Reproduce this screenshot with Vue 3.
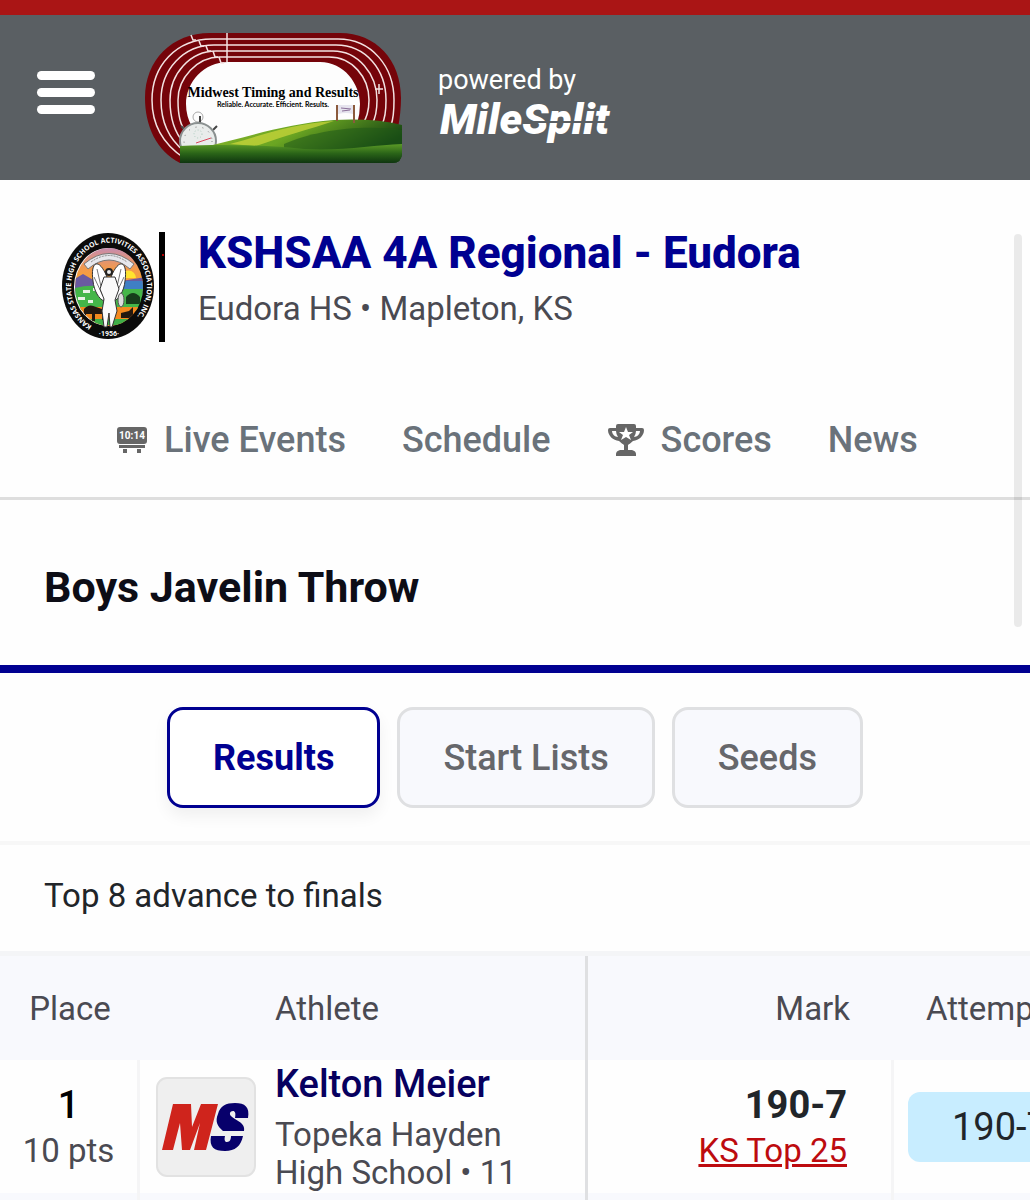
<template>
  <div class="page">
    <div class="stripe"></div>
    <header class="topbar">
      <button class="menu" type="button" aria-label="Menu">
        <span></span>
        <span></span>
        <span></span>
      </button>

      <a class="timer-logo" href="#" aria-label="Midwest Timing and Results">
        <svg width="260" height="132" viewBox="0 0 260 132">
          <defs>
            <linearGradient id="front" x1="0" y1="0" x2="0" y2="1">
              <stop offset="0" stop-color="#5b9a26" />
              <stop offset="0.5" stop-color="#2a6418" />
              <stop offset="1" stop-color="#0f3510" />
            </linearGradient>
            <linearGradient id="hill" x1="0" y1="0" x2="1" y2="0.4">
              <stop offset="0" stop-color="#8fb82e" />
              <stop offset="0.5" stop-color="#6aa522" />
              <stop offset="1" stop-color="#123f12" />
            </linearGradient>
          </defs>
          <path
            d="M66 1H196C232 1 257 28 257 66Q257 80 254 96L200 112H36V131C12 119 1 93 1 66C1 28 28 1 66 1Z"
            fill="#75040a"
          />
          <path d="M40 126C19 112 8 92 8 68C8 34 32 7 68 7H194C228 7 250 35 250 68C250 80 249 88 247 93" class="lane" />
          <path d="M40 119C25 107 17 90 17 68C17 38 39 13 70 13H192C222 13 242 38 242 68C242 80 241 87 238 92" class="lane" />
          <path d="M40 111C30 100 26 86 26 68C26 42 46 19 72 19H189C214 19 233 42 233 68C233 80 231 87 228 92" class="lane" />
          <path d="M43 102C36 93 34 83 34 68C34 46 53 25 76 25H185C208 25 225 45 225 68C225 80 222 86 219 92" class="lane" />
          <path d="M48 95Q42 84 42 72C42 50 60 30 84 30H176C200 30 216 52 216 72Q216 82 213 92L120 112H56Z" fill="#fdfdfd" />
          <path
            d="M83 1V30M47 3L49 8H52M55 9L57 14H60M62 14L64 19H67M69 19L71 25H74M75 25L77 31H80M235 52V62M231 57H239"
            class="lane"
          />
          <circle cx="54" cy="85" r="5" fill="none" stroke="#aaa" />
          <path d="M56 84V92M69 98L73 94M41 98L37 94" stroke="#444" stroke-width="2" />
          <circle cx="54" cy="109" r="18" fill="#e9eceb" stroke="#8a9090" stroke-width="2" />
          <circle cx="54" cy="109" r="14" fill="none" stroke="#777" stroke-dasharray="1 6" />
          <path d="M52 111L67 106" stroke="#d9455a" />
          <circle cx="54" cy="102" r="4" fill="none" stroke="#a9cabc" stroke-dasharray="1 2" />
          <path d="M60 115C100 106 140 92 190 88Q230 86 258 93V121Q258 131 248 131H60Z" fill="url(#hill)" />
          <path d="M86 112C116 104 146 92 190 89C166 97 140 104 112 114Z" fill="#cfd93c" opacity="0.7" />
          <path d="M140 112C170 98 220 92 258 98V121H140Z" fill="#1f5a18" opacity="0.55" />
          <path d="M36 114C80 112 120 113 160 117C200 119 230 113 258 112V121Q258 131 248 131H36Z" fill="url(#front)" />
          <path d="M193 73V89M210 73V91" stroke="#8b5a3c" stroke-width="2" />
          <path d="M194 73H209V82Q202 80 194 82Z" fill="#e6e4ee" />
          <path d="M197 76L207 77M198 79L206 78" stroke="#8a6f98" />
          <text x="129" y="65" text-anchor="middle" class="timer-name">Midwest Timing and Results</text>
          <text x="129" y="75" text-anchor="middle" class="timer-tag">Reliable. Accurate. Efficient. Results.</text>
        </svg>
      </a>

      <a class="powered" href="#">
        <span>powered by</span>
        <svg width="190" height="52" viewBox="0 0 190 52">
          <text x="2" y="38" class="milesplit">MileSplit</text>
          <path d="M84 26H176" stroke="#5a5f63" stroke-width="2" />
        </svg>
      </a>
    </header>

    <section class="meet">
      <svg class="seal" width="104" height="112" viewBox="0 0 104 112">
        <defs>
          <path id="ring" d="M31 95A38 44 0 1 1 65 95" />
          <linearGradient id="sunset" x1="0" y1="0" x2="0" y2="1">
            <stop offset="0" stop-color="#c58bb5" />
            <stop offset="0.5" stop-color="#f39a4a" />
            <stop offset="1" stop-color="#f7a823" />
          </linearGradient>
          <clipPath id="scene"><ellipse cx="48" cy="56" rx="34" ry="39" /></clipPath>
        </defs>
        <ellipse cx="47" cy="55" rx="46" ry="53" fill="#0b0b0b" />
        <ellipse cx="47" cy="56" rx="34" ry="39" fill="#fff" />
        <g clip-path="url(#scene)">
          <rect x="10" y="16" width="80" height="44" fill="url(#sunset)" />
          <path d="M10 50L22 43L34 50L44 47L60 50L86 46V66H10Z" fill="#6a5aa0" />
          <path d="M60 47A7 7 0 0 1 75 47Z" fill="#ffe32e" />
          <path d="M10 58Q30 52 48 57L86 53V80H10Z" fill="#45b649" />
          <path d="M60 50H84V58H60Z" fill="#3f7fc4" />
          <path d="M10 76H86V98H10Z" fill="#f58a1f" />
          <path d="M16 88H78V94H16Z" fill="#3fae49" />
          <path d="M22 59H29V62H22ZM32 57H38V60H32ZM17 66H24V69H17ZM27 69H32V72H27Z" fill="#e9f2e5" />
          <path d="M65 66Q72 58 79 66V73H65Z" fill="#173d1b" />
          <path d="M23 78Q28 72 35 76L44 79V89H41V83H34V90H31V83H25V89H22ZM60 82L68 80L72 76V87H60Z" fill="#24180f" />
        </g>
        <path d="M23 33Q48 12 73 33L69 38Q48 20 27 38Z" fill="#e7e7ec" stroke="#777" />
        <path d="M30 31Q48 18 66 31" fill="none" stroke="#888" stroke-dasharray="2 1" />
        <path d="M46 46C38 26 29 30 32 50C33 60 38 68 43 70ZM50 46C58 26 67 30 64 50C63 60 58 68 53 70Z" fill="#fff" stroke="#333" />
        <path d="M36 38L41 60M33 46L42 65M60 38L55 60M63 46L54 65" stroke="#777" />
        <path d="M43 46H54L58 58L54 69L56 80L51 96H49L48 82L46 96H43L41 80L43 68L39 58Z" fill="#fafafa" stroke="#333" />
        <circle cx="48" cy="41" r="3" fill="#eee" stroke="#222" stroke-width="2" />
        <ellipse cx="60" cy="69" rx="3" ry="7" fill="#ddd" stroke="#555" />
        <text class="seal-text">
          <textPath href="#ring">KANSAS STATE HIGH SCHOOL ACTIVITIES ASSOCIATION, INC.</textPath>
        </text>
        <text x="48" y="105" text-anchor="middle" class="seal-year">·1956·</text>
        <rect x="98" y="1" width="6" height="110" fill="#000" />
        <circle cx="102" cy="24" r="1" fill="#e00" />
      </svg>
      <div>
        <h1>KSHSAA 4A Regional - Eudora</h1>
        <p class="venue">Eudora HS • Mapleton, KS</p>
      </div>
    </section>

    <nav class="tabs">
      <a href="#">
        <svg width="32" height="28" viewBox="0 0 32 28">
          <rect x="1" y="1" width="30" height="17" rx="3" fill="#666" />
          <text x="16" y="13" text-anchor="middle" class="clock">10:14</text>
          <path d="M3 19H29V22H3ZM7 23H11V27H7ZM21 23H25V27H21Z" fill="#666" />
        </svg>
        Live Events
      </a>
      <a href="#">Schedule</a>
      <a href="#">
        <svg width="38" height="34" viewBox="0 0 38 34">
          <path
            d="M9 5V3Q9 1 11 1H27Q29 1 29 3V5H35Q37 5 37 7C37 13 32 17 26 18C24 20 22 21 21 22V27H25Q29 28 29 31V33H9V31Q9 28 13 27H17V22C16 21 14 20 12 18C6 17 1 13 1 7Q1 5 3 5ZM9 8H5C5 11 8 14 11 14Q9 11 9 8ZM29 8Q29 11 27 14C30 14 33 11 33 8Z"
            fill="#666"
            fill-rule="evenodd"
          />
          <path d="M19 4L21 9L26 9L22 12L24 17L19 14L14 17L16 12L12 9L17 9Z" fill="#fff" />
        </svg>
        Scores
      </a>
      <a href="#">News</a>
    </nav>

    <h2>Boys Javelin Throw</h2>

    <div class="views">
      <button
        v-for="view in views"
        :key="view"
        type="button"
        :class="{ active: view === current }"
        @click="current = view"
      >
        {{ view }}
      </button>
    </div>

    <p class="note">Top 8 advance to finals</p>

    <div class="results">
      <table>
        <colgroup>
          <col class="col-place" />
          <col class="col-logo" />
          <col class="col-athlete" />
          <col class="col-mark" />
          <col class="col-attempt" />
        </colgroup>
        <thead>
          <tr>
            <th>Place</th>
            <th></th>
            <th class="athlete">Athlete</th>
            <th class="mark">Mark</th>
            <th class="attempt">Attempts</th>
          </tr>
        </thead>
        <tbody>
          <tr>
            <td class="place">
              <strong>1</strong>
              <span>10 pts</span>
            </td>
            <td class="logo">
              <svg width="100" height="100" viewBox="0 0 100 100">
                <rect x="1" y="1" width="98" height="98" rx="10" fill="#efefef" stroke="#e2e2e2" stroke-width="2" />
                <path d="M17 27H35L36 50L45 27H62L50 73H38L44 46L34 73H26L24 46L17 73H6Z" fill="#cf241c" />
                <path
                  d="M92 41H79C80 36 79 34 77 34C74 34 73 37 75 39C79 43 90 46 88 54H67C61 49 59 44 62 37C64 29 70 26 79 26C89 26 94 30 92 41ZM55 59H69C68 63 69 65 71 65C74 65 75 62 75 59H87C85 69 79 74 69 74C58 74 53 70 55 59Z"
                  fill="#07006b"
                />
              </svg>
            </td>
            <td class="athlete">
              <a href="#">Kelton Meier</a>
              <span>Topeka Hayden High School • 11</span>
            </td>
            <td class="mark">
              <strong>190-7</strong>
              <a href="#">KS Top 25</a>
            </td>
            <td class="attempt"><span>190-7</span></td>
          </tr>
        </tbody>
        <tfoot>
          <tr>
            <td class="place"></td>
            <td></td>
            <td class="athlete"></td>
            <td class="mark"></td>
            <td></td>
          </tr>
        </tfoot>
      </table>
    </div>
    <div class="scrollbar"></div>
  </div>
</template>

<script setup>
import { ref } from 'vue';

const views = ['Results', 'Start Lists', 'Seeds'];
const current = ref('Results');
</script>

<style>
body {
  background: #fefefe;
}
</style>

<style scoped>
.page {
  position: relative;
  overflow: hidden;
  min-height: 100vh;
  background: #fefefe;
  color: #212529;
  font-family: Roboto, "Liberation Sans", sans-serif;
}

a {
  color: inherit;
  text-decoration: none;
}

p,
h1,
h2 {
  margin: 0;
}

.stripe {
  height: 15px;
  background: #aa1515;
}

.topbar {
  display: flex;
  align-items: center;
  box-sizing: border-box;
  height: 165px;
  padding: 0 37px;
  background: #5a5f63;
}

.menu {
  display: flex;
  flex-direction: column;
  gap: 8px;
  width: 58px;
  margin: 0 49px 10px 0;
  padding: 0;
  border: 0;
  background: none;
}

.menu span {
  height: 9px;
  border-radius: 5px;
  background: #fff;
}

.timer-logo {
  display: flex;
  margin-right: 34px;
}

.lane {
  fill: none;
  stroke: #f3e2e2;
  stroke-width: 1.5;
}

.timer-name {
  font: bold 14px "Liberation Serif", serif;
}

.timer-tag {
  font: bold 7px Lato, sans-serif;
}

.powered {
  display: flex;
  flex-direction: column;
  padding-top: 16px;
  color: #fff;
  font-size: 27px;
  line-height: 32px;
}

.milesplit {
  fill: #fff;
  font: italic 900 43px Roboto, sans-serif;
}

.meet {
  display: flex;
  align-items: flex-start;
  gap: 33px;
  padding: 51px 61px 0;
}

.seal-text {
  fill: #fff;
  font: bold 7px "Open Sans", sans-serif;
}

.seal-year {
  fill: #fff;
  font: bold 7px Roboto, sans-serif;
}

h1 {
  color: #000091;
  font-size: 44px;
  font-weight: 800;
  line-height: 44px;
}

.venue {
  margin-top: 14px;
  color: #4a4a52;
  font-size: 33px;
  line-height: 40px;
}

.tabs {
  display: flex;
  gap: 56px;
  justify-content: center;
  margin-top: 55px;
  padding: 20px 0 35px 4px;
  border-bottom: 3px solid #dedede;
  color: #6a727a;
  font-size: 36px;
  font-weight: 500;
  line-height: 44px;
}

.tabs a {
  display: flex;
  align-items: center;
  gap: 16px;
}

.clock {
  fill: #fff;
  font: bold 10px Roboto, sans-serif;
}

h2 {
  padding: 59px 44px 50px;
  border-bottom: 8px solid #000091;
  color: #0d0d16;
  font-size: 43px;
  font-weight: 700;
  line-height: 56px;
}

.views {
  display: flex;
  gap: 17px;
  justify-content: center;
  padding: 34px 0 33px;
  border-bottom: 4px solid #f7f7f7;
}

.views button {
  height: 101px;
  padding: 0 43px;
  border: 3px solid #dfe0e2;
  border-radius: 16px;
  background: #f8f9fd;
  color: #66676b;
  font: 500 36px Roboto, sans-serif;
}

.views button.active {
  border-color: #000091;
  background: #fff;
  box-shadow: 0 8px 16px #0000000f;
  color: #000091;
  font-weight: 700;
}

.note {
  padding: 31px 44px 35px;
  font-size: 33px;
  line-height: 40px;
}

.results {
  overflow: hidden;
  border-top: 5px solid #f4f5f7;
}

table {
  width: 1160px;
  border-collapse: separate;
  border-spacing: 0;
  table-layout: fixed;
}

.col-place {
  width: 140px;
}

.col-logo {
  width: 135px;
}

.col-athlete {
  width: 313px;
}

.col-mark {
  width: 306px;
}

th {
  height: 104px;
  padding: 0;
  background: #f8f9fd;
  color: #4a4a52;
  font-size: 33px;
  font-weight: 400;
}

td {
  box-sizing: border-box;
  height: 133px;
  padding: 0;
}

th.athlete,
td.athlete {
  border-right: 3px solid #dfe0e2;
  text-align: left;
}

td.athlete {
  padding-right: 40px;
  vertical-align: top;
}

td.athlete a {
  display: block;
  color: #07005f;
  font-size: 38px;
  font-weight: 500;
  line-height: 48px;
}

td.athlete span {
  display: block;
  margin-top: 8px;
  color: #4a4a52;
  font-size: 33px;
  line-height: 38px;
}

.place {
  border-right: 3px solid #f5f5f6;
  text-align: center;
}

.place strong {
  display: block;
  color: #000;
  font-size: 38px;
  font-weight: 500;
  line-height: 48px;
}

.place span {
  color: #4a4a52;
  font-size: 33px;
  line-height: 44px;
}

.logo svg {
  display: block;
  margin-left: 16px;
}

.mark {
  padding-right: 44px;
  text-align: right;
}

td.mark {
  border-right: 3px solid #f5f5f6;
}

td.mark strong {
  display: block;
  font-size: 38px;
  line-height: 48px;
}

td.mark a {
  color: #bd0b0f;
  font-size: 33px;
  line-height: 44px;
  text-decoration: underline;
}

th.attempt {
  padding-left: 32px;
  text-align: left;
}

td.attempt span {
  display: block;
  margin-left: 14px;
  padding: 0 44px;
  border-radius: 12px;
  background: #c8edff;
  font-size: 38px;
  line-height: 70px;
}

tfoot td {
  height: 7px;
  background: #f8f9fd;
}

/* page scroll thumb, floats over the content */
.scrollbar {
  position: absolute;
  top: 234px;
  right: 8px;
  width: 8px;
  height: 393px;
  border-radius: 4px;
  background: #00000014;
}
</style>
